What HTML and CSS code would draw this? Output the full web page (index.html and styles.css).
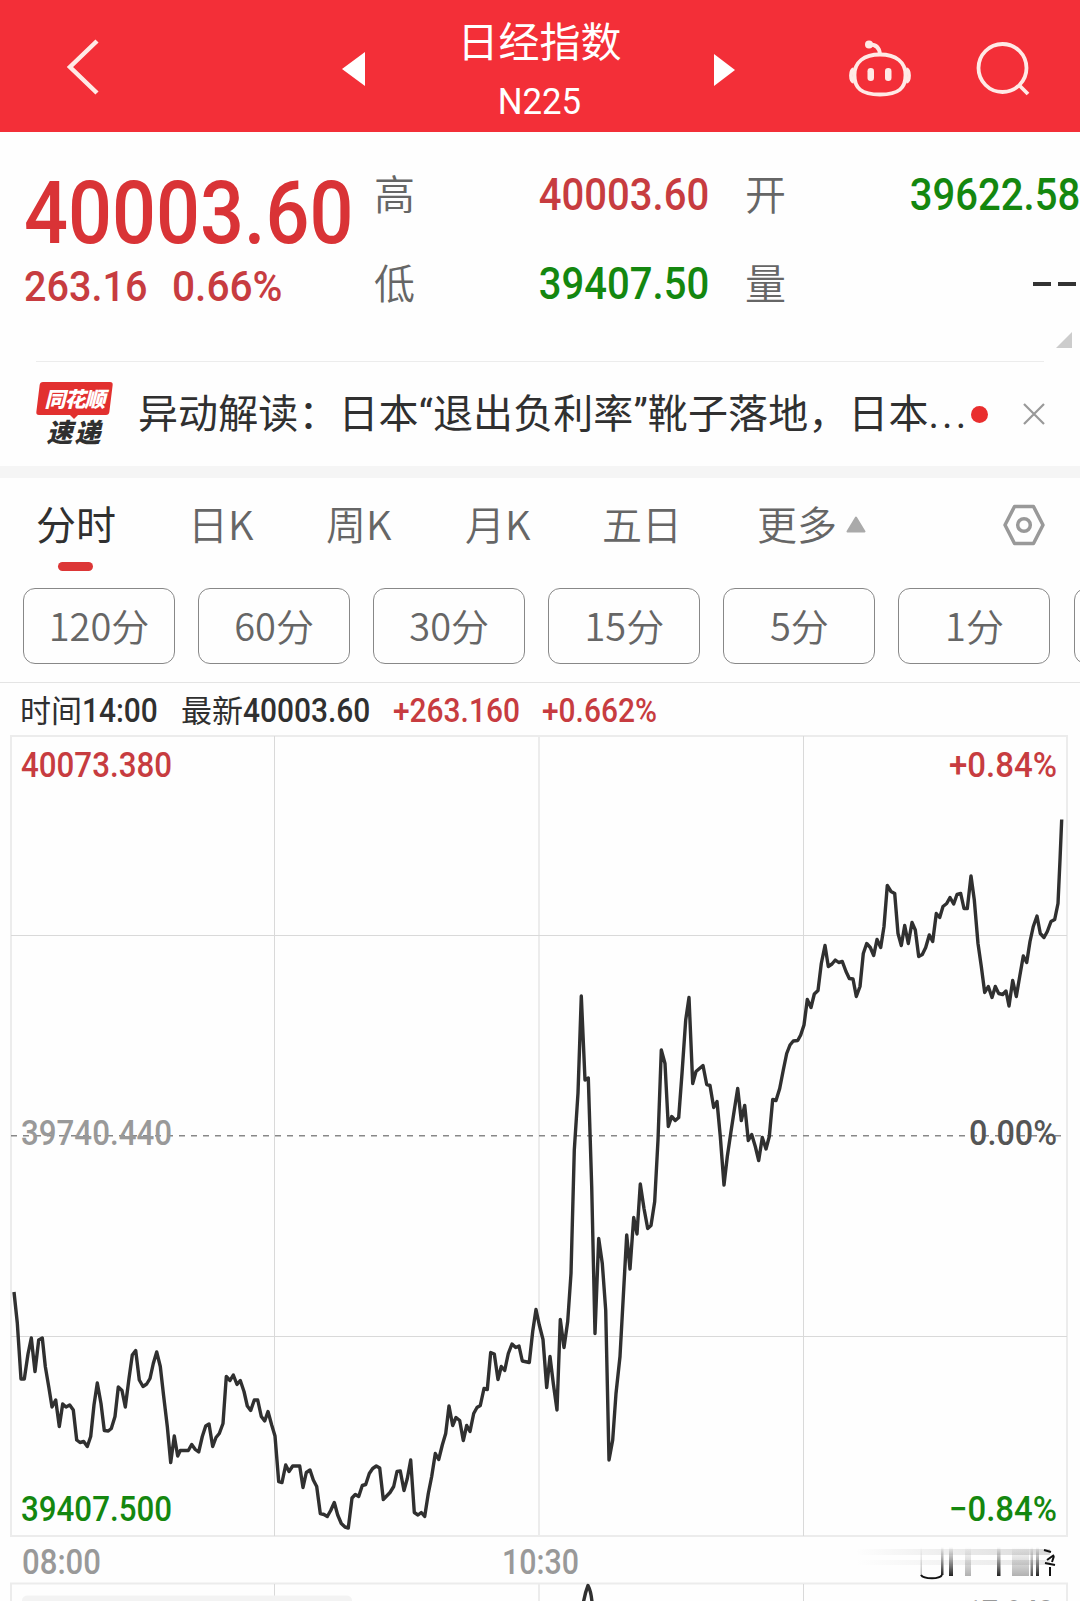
FILE: index.html
```html
<!DOCTYPE html>
<html lang="zh-CN">
<head>
    <meta charset="UTF-8">
    <meta name="viewport" content="width=device-width, initial-scale=1.0">
    <title>日经指数 N225</title>
    <link rel="stylesheet" href="styles.css">
</head>
<body>
    <header class="header">
        <svg class="icon-back" viewBox="0 0 34 58"><path d="M31 3 L4 29 L31 55"/></svg>
        <svg class="icon-prev" viewBox="0 0 23 34"><path d="M23 0 V34 L0 17 Z"/></svg>
        <div class="title">
            <h1>日经指数</h1>
            <div class="code"><span class="num">N225</span></div>
        </div>
        <svg class="icon-next" viewBox="0 0 21 32"><path d="M0 0 V32 L21 16 Z"/></svg>
        <svg class="icon-robot" viewBox="0 0 62 58">
            <path d="M31 14.500 C47 14.500 56.500 22 56.500 35 C56.500 48 50 54.500 31 54.500 C12 54.500 5.500 48 5.500 35 C5.500 22 15 14.500 31 14.500 Z"/>
            <path d="M5 29 Q2 30 2 35.500 Q2 41 5 42 M57 29 Q60 30 60 35.500 Q60 41 57 42"/>
            <path d="M20 4.500 Q30 4 31 14"/>
            <circle class="fill" cx="20" cy="4.500" r="4"/>
            <rect class="fill" x="18.500" y="28" width="6.500" height="13" rx="3.200"/>
            <rect class="fill" x="36" y="28" width="6.500" height="13" rx="3.200"/>
        </svg>
        <svg class="icon-search" viewBox="0 0 56 56"><circle cx="26.500" cy="26" r="24"/><path d="M43 43 L52 52"/></svg>
    </header>

    <section class="quote">
        <div class="quote-main">
            <div class="price"><span class="num">40003.60</span></div>
            <div class="change">
                <span class="num">263.16</span>
                <span class="num">0.66%</span>
            </div>
        </div>
        <div class="quote-grid">
            <span class="label">高</span>
            <span class="value up"><span class="num">40003.60</span></span>
            <span class="label">开</span>
            <span class="value down"><span class="num">39622.58</span></span>
            <span class="label">低</span>
            <span class="value down"><span class="num">39407.50</span></span>
            <span class="label">量</span>
            <span class="value dashes"><i></i><i></i></span>
        </div>
        <div class="corner"></div>
    </section>

    <section class="news">
        <div class="news-logo">
            <div class="logo-top">同花顺</div>
            <div class="logo-bottom">速递</div>
        </div>
        <div class="news-text">异动解读：日本“退出负利率”靴子落地，日本<span class="more-dots">...</span></div>
        <span class="dot"></span>
        <svg class="icon-close" viewBox="0 0 22 22"><path d="M1 1 L21 21 M21 1 L1 21"/></svg>
    </section>

    <nav class="tabs">
        <span class="tab active">分时</span>
        <span class="tab">日K</span>
        <span class="tab">周K</span>
        <span class="tab">月K</span>
        <span class="tab">五日</span>
        <span class="tab">更多<svg class="icon-up" viewBox="0 0 20 17"><path d="M10 1.500 L18.500 15.500 H1.500 Z"/></svg></span>
        <svg class="icon-setting" viewBox="0 0 42 42"><path d="M11.500 2.500 H30.500 L40 21 L30.500 39.500 H11.500 L2 21 Z"/><circle cx="21" cy="21" r="6.300"/></svg>
    </nav>

    <div class="periods">
        <span class="period">120分</span>
        <span class="period">60分</span>
        <span class="period">30分</span>
        <span class="period">15分</span>
        <span class="period">5分</span>
        <span class="period">1分</span>
        <span class="period"></span>
    </div>

    <div class="info">
        <span>时间<span class="num">14:00</span></span>
        <span>最新<span class="num">40003.60</span></span>
        <span class="up"><span class="num">+263.160</span></span>
        <span class="up"><span class="num">+0.662%</span></span>
    </div>

    <svg class="chart" viewBox="0 734 1080 867">
        <defs>
            <linearGradient id="fade" x1="0" y1="0" x2="0" y2="1">
                <stop offset="0" stop-color="#222" stop-opacity="0"/>
                <stop offset="0.5" stop-color="#222" stop-opacity="0.450"/>
                <stop offset="1" stop-color="#222"/>
            </linearGradient>
            <linearGradient id="smear" x1="0" y1="0" x2="1" y2="0">
                <stop offset="0" stop-color="#555" stop-opacity="0"/>
                <stop offset="1" stop-color="#555" stop-opacity="0.350"/>
            </linearGradient>
        </defs>

        <!-- grid -->
        <path class="frame" d="M11 736 H1067 V1536 H11 Z M11 1601 V1583.500 H1067 V1601"/>
        <path class="frame" d="M539 736 V1536 M539 1583.500 V1601"/>
        <path class="grid" d="M274.500 736 V1536 M803.500 736 V1536 M11 935.500 H1067 M11 1336.500 H1067 M274.500 1584 V1601 M803.500 1584 V1601"/>
        <path class="base" d="M11 1135.700 H1067"/>

        <!-- axis labels -->
        <text class="up" x="21" y="777" textLength="151" lengthAdjust="spacingAndGlyphs">40073.380</text>
        <text class="up" x="949" y="777" textLength="108" lengthAdjust="spacingAndGlyphs">+0.84%</text>
        <text class="mid" x="21" y="1145" textLength="151" lengthAdjust="spacingAndGlyphs">39740.440</text>
        <text class="zero" x="969" y="1145" textLength="88" lengthAdjust="spacingAndGlyphs">0.00%</text>
        <text class="down" x="21" y="1521" textLength="151" lengthAdjust="spacingAndGlyphs">39407.500</text>
        <text class="down" x="949" y="1521" textLength="108" lengthAdjust="spacingAndGlyphs">−0.84%</text>
        <text class="time" x="22" y="1574" textLength="79" lengthAdjust="spacingAndGlyphs">08:00</text>
        <text class="time" x="502" y="1574" textLength="77" lengthAdjust="spacingAndGlyphs">10:30</text>

        <!-- price line -->
        <polyline class="line" points="14,1292 17.3,1323 21,1379 24.3,1379 28,1354 31.3,1338 35,1371.5 38.7,1340 42.3,1338 45.3,1366.5 48.7,1386.5 52,1407 55.7,1400 59.3,1426.5 62.7,1404 66,1407 69.7,1405 73.3,1410 76.7,1440 80,1442.5 83.7,1441.5 87.3,1446.5 90.7,1436.5 94,1405 97.3,1383 101,1403.5 104.3,1430.5 108.3,1431 111.3,1428.5 115,1416.5 118.3,1387 122,1390.5 125.3,1407 129,1378.5 132.3,1355 135.7,1350.5 139.3,1380 143,1386.5 146.7,1384 150,1378.5 153.3,1363.5 156.7,1352 160.3,1366.5 163.7,1396.5 167.3,1426.5 170.7,1462.5 174.3,1436 177.7,1456 180.3,1450.5 188.3,1450.5 191.7,1444.5 195.3,1449.5 198.7,1452 202.3,1436.5 205.7,1426 209,1424 212.7,1446.5 216,1437.5 219.3,1433.5 223,1423.5 226.3,1376.5 230,1380.5 233.3,1375 237,1384.5 240.3,1380.5 244,1391.5 247.3,1406 250.7,1410.5 254.3,1400 257.7,1400 261.3,1416.5 264.7,1421 268,1411.5 271.7,1425 275,1436 278.7,1481.5 282,1482.5 285.7,1465 289,1471.5 292.7,1466 299.7,1466 303,1487.5 306.3,1472.5 310,1470 313.3,1480 316.7,1486.5 320.3,1513.5 324,1514.5 327.3,1516.5 330.7,1510.5 334.3,1502.5 337.7,1515 341.3,1523.5 345,1527 348.3,1528
            352,1498 355.3,1494.5 358.7,1496.5 362.3,1485.5 365.7,1484.5 369.3,1473.5 372.7,1468.5 376.3,1466 379.7,1468 383.3,1499.5 390,1492.5 393.7,1486.5 397,1471.5 400.3,1471 404,1490.5 407.3,1478.5 410.7,1460 414.3,1512.5 418,1515 421.3,1512.5 424.7,1516.5 428.3,1493.5 431.7,1476.5 435.3,1453.5 438.7,1459.5 442.3,1445 445.7,1433.5 449,1406 452.7,1425.5 456,1417.5 459.7,1420.5 463.3,1440.5 466.7,1425.5 470,1431.5 473.7,1413.5 477,1407.5 480.3,1405.5 484,1388.5 487.3,1389.5 490.7,1352.5 494.3,1354 498,1379.5 501.3,1366.5 504.7,1370.5 508.3,1353.5 512,1344 515.7,1347.5 519,1346 522.3,1361 529.3,1362.5 532.7,1331.5 536,1309.5 539.3,1325 543,1339.5 546.7,1387.5 550,1356.5 553.3,1383.5 557,1410 560.3,1319.5 564,1347.5
            567.7,1321.5 571,1273.5 574.3,1150 578,1093 581.3,996 585,1080 588.3,1078 591.7,1186.5 595,1333.5 598.7,1238.5 602.3,1263.5 605.7,1310 609,1460 612.7,1440 616,1393.5 620,1356.5 623.3,1296.5 626.7,1235 630,1269 633.7,1217.5 637,1234 640.3,1184 644,1208.5 647.7,1228.5 651,1225.5 654.7,1201.5 658,1140 661.3,1050 665,1063.5 668.3,1126.5 671.7,1116.5 675.3,1120.5 678.7,1117.5 682,1073.5 685.7,1020 689,997.5 692.7,1083.5 696,1071.5 703,1065.5 706.7,1084.5 710,1085.5 713.7,1107.5 717,1101.5 720.3,1136.5 724,1185 727.3,1156.5 731,1131.5 734.3,1110 737.7,1088.5 741.3,1120.5 744.7,1105.5 748.3,1140.5 751.7,1134.5 755.3,1146.5 758.7,1160.5 762.3,1137.5 766,1149 769.3,1136.5 772.7,1099.5 776,1100.5 779.7,1088.5 783.3,1070 786.7,1053.5 790,1045 793.3,1041 797.7,1040.5 800.7,1035 804,1025 807.3,999.5 811,1007.5 814.3,994
            818,990.5 821.3,963.5 825,945.5 828.3,966.5 832,964 835.3,960 838.7,962.5 842.3,961.5 846,971.5 849.3,978.5 853,979 856.3,996.5 860,986.5 863.3,953.5 866.7,943.5 870.3,947.5 873.7,955.5 877,939.5 880.7,947.5 884,926.5 887.3,885.5 891,891.5 894.7,893.5 898,933.5 901.3,945.5 904.7,925.5 908.3,943.5 912,922.5 915.3,930 918.7,956.5 922.3,954.5 925.7,947.5 929.3,935 932.7,941.5 936.3,913.5 939.7,917.5 943,906.5 946.7,903.5 950,897.5 953.7,904 957,894.5 960.7,893.5 964,908.5 967.3,908.5 971,876 974.3,900 978,943.5 981.3,966.5 984.7,992.5 988.3,986.5 992,997.5 995.3,986.5 998.7,993.5 1002.7,994.5 1006,991 1009,1006 1012.7,980.5 1016.3,996.5 1019.7,976.5 1023.3,956 1026.7,962.5 1030,941.5 1033.3,926.5 1037,916 1040.3,933.5 1044,937.5 1047.3,931.5 1051,921.5 1054.7,919.5 1058,903.5 1060,860 1061.7,819.5"/>

        <!-- smeared time label -->
        <g>
            <rect x="855" y="1549" width="195" height="6" fill="url(#smear)" opacity="0.600"/>
            <rect x="855" y="1560" width="195" height="5" fill="url(#smear)" opacity="0.400"/>
            <rect x="920.500" y="1547" width="1.500" height="29" fill="url(#fade)" opacity="0.300"/>
            <rect x="941" y="1547" width="2.500" height="28" fill="url(#fade)"/>
            <path class="ink" d="M921 1575 Q923 1578.300 932 1578.300 Q940 1578.300 942 1575"/>
            <rect x="949" y="1547" width="4" height="29" fill="url(#fade)"/>
            <rect x="965" y="1547" width="6" height="29" fill="url(#fade)" opacity="0.350"/>
            <rect x="997" y="1547" width="3.500" height="29" fill="url(#fade)"/>
            <rect x="1012" y="1547" width="17" height="29" fill="url(#fade)" opacity="0.350"/>
            <rect x="1030.500" y="1547" width="2.500" height="29" fill="url(#fade)" opacity="0.800"/>
            <rect x="1036" y="1547" width="3" height="29" fill="url(#fade)"/>
            <path class="ink" d="M1044 1550 L1051 1552 M1054 1555 L1047 1560 M1045 1563 L1055 1565 M1054 1556 L1052 1562 M1050 1567 V1576"/>
        </g>

        <!-- lower panel, cut by the screen edge -->
        <path class="panel" d="M22 1601 Q22 1595.500 28 1595.500 H346 Q352 1595.500 352 1601 Z"/>
        <path class="line" d="M583.500 1602 Q585 1593 588 1585.500 Q591 1591 592 1602"/>
        <text class="mid" x="966" y="1625" textLength="88" lengthAdjust="spacingAndGlyphs">17.943</text>
    </svg>
</body>
</html>
```
FILE: styles.css
```css
:root {
    --red: #f32f38;
    --up: #c73c40;
    --down: #14870f;
    --dark: #303030;
    --grey: #666;
}

* {
    margin: 0;
    padding: 0;
    box-sizing: border-box;
}

body {
    width: 1080px;
    height: 1601px;
    overflow: hidden;
    background: #fefefe;
    color: var(--dark);
    font-family: "Noto Sans CJK SC", sans-serif;
}

svg {
    display: block;
    flex: none;
}

/* narrow digits */
.num {
    display: inline-block;
    font-family: Roboto, sans-serif;
    font-weight: 500;
    transform: scaleX(0.92);
    transform-origin: left;
}

.up {
    color: var(--up);
    fill: var(--up);
}

.down {
    color: var(--down);
    fill: var(--down);
}

/* header */
.header {
    display: flex;
    height: 132px;
    background: var(--red);
    color: #fff;
}

.header svg {
    fill: none;
    stroke: #ffeae6;
    stroke-width: 3.8;
}

.header .fill {
    fill: #ffeae6;
    stroke: none;
}

.header .icon-back {
    width: 34px;
    height: 58px;
    margin: 38px 0 0 66px;
    stroke-width: 4.5;
}

.header .icon-prev,
.header .icon-next {
    fill: #fff;
    stroke: none;
}

.icon-prev {
    width: 23px;
    height: 34px;
    margin: 52px 0 0 242px;
}

.icon-next {
    width: 21px;
    height: 32px;
    margin: 54px 0 0;
}

.title {
    width: 349px;
    padding-top: 14px;
    text-align: center;
}

.title h1 {
    font-size: 41px;
    line-height: 50px;
    font-weight: 400;
}

.code {
    font-size: 37px;
    line-height: 44px;
    margin-top: 12px;
}

.code .num {
    font-weight: 400;
    transform: scaleX(0.94);
    transform-origin: center;
}

.icon-robot {
    width: 62px;
    height: 58px;
    margin: 40px 0 0 114px;
}

.icon-search {
    width: 56px;
    height: 56px;
    margin: 42px 0 0 65px;
}

/* quote */
.quote {
    position: relative;
    display: flex;
    height: 229px;
    padding: 39px 0 0 24px;
}

.quote-main {
    width: 350px;
    color: #d93336;
}

.price {
    height: 91px;
    font-size: 87px;
    line-height: 69px;
    white-space: nowrap;
}

.price .num {
    transform: scaleX(0.89);
}

.change {
    display: grid;
    grid-template-columns: 148px 1fr;
    font-size: 43px;
    line-height: 48px;
    color: var(--up);
}

.change .num:last-child {
    transform: scaleX(0.945);
}

.quote-grid {
    display: grid;
    grid-template-columns: 41px 294px 76px 295px;
    grid-template-rows: 89px 89px;
    margin-top: -23px;
}

.quote-grid > span {
    line-height: 88px;
}

.label {
    color: var(--grey);
    font-size: 41px;
    font-weight: 350;
}

.quote-grid .label:nth-child(4n + 3) {
    padding-left: 36px;
}

.value {
    font-size: 43.5px;
    text-align: right;
}

.value .num {
    transform-origin: right;
}

.dashes {
    display: flex;
    justify-content: flex-end;
    align-items: center;
    gap: 7px;
    padding: 4px 4px 0 0;
}

.dashes i {
    width: 18px;
    height: 4px;
    background: #333;
}

.corner {
    position: absolute;
    right: 8px;
    bottom: 13px;
    border-left: 16px solid transparent;
    border-bottom: 16px solid #ccc;
}

/* news */
.news {
    display: flex;
    align-items: center;
    height: 105px;
    margin: 0 36px;
    border-top: 1px solid #ececec;
}

.news-logo {
    flex: none;
    width: 77px;
    height: 64px;
    margin-right: 25px;
    text-align: center;
    font-weight: 900;
    font-style: italic;
}

.logo-top {
    position: relative;
    height: 33px;
    color: #fff;
    font-size: 21px;
    line-height: 33px;
    letter-spacing: -1px;
    z-index: 0;
}

.logo-top::before {
    content: "";
    position: absolute;
    inset: 0 2px;
    border-radius: 3px;
    background: #e2302f;
    transform: skewX(-7deg);
    z-index: -1;
}

.logo-top::after {
    content: "";
    position: absolute;
    left: 33px;
    top: 32px;
    border: 5px solid transparent;
    border-top-color: #e2302f;
    border-bottom: 0;
}

.logo-bottom {
    font-size: 26px;
    line-height: 31px;
    letter-spacing: 2px;
}

.news-text {
    flex: none;
    width: 829px;
    padding-top: 2px;
    font-family: Roboto, "Noto Sans CJK SC", sans-serif;
    font-size: 40px;
    line-height: 60px;
    letter-spacing: 0.1px;
    white-space: nowrap;
}

.more-dots {
    letter-spacing: 3px;
}

.dot {
    flex: none;
    width: 17px;
    height: 17px;
    margin: 0 35px 0 4px;
    border-radius: 50%;
    background: #e92e2e;
}

.icon-close {
    width: 22px;
    height: 22px;
    stroke: #999;
    stroke-width: 2.2;
}

/* tabs */
.tabs {
    display: grid;
    grid-template-columns: 152px 138px 139px 137px 155px 246px 42px;
    height: 122px;
    padding: 16px 0 0 36px;
    border-top: 12px solid #f5f5f5;
    color: var(--grey);
    font-size: 40px;
    line-height: 58px;
    font-weight: 350;
}

.tab {
    display: flex;
    height: 76px;
}

.tab.active {
    position: relative;
    color: var(--dark);
    font-weight: 400;
}

.tab.active::after {
    content: "";
    position: absolute;
    left: 22px;
    bottom: -1px;
    width: 35px;
    height: 9px;
    border-radius: 5px;
    background: #dc3636;
}

.icon-up {
    width: 20px;
    height: 17px;
    margin: 22px 0 0 9px;
    fill: #aaa;
    stroke: #aaa;
    stroke-width: 2;
    stroke-linejoin: round;
}

.icon-setting {
    width: 42px;
    height: 42px;
    margin-top: 10px;
    fill: none;
    stroke: #999;
    stroke-width: 3.5;
    stroke-linejoin: round;
}

/* periods */
.periods {
    display: flex;
    gap: 23.1px;
    height: 94px;
    padding-left: 23px;
    overflow: hidden;
}

.period {
    flex: none;
    width: 152px;
    height: 76px;
    border: 1px solid #888;
    border-radius: 12px;
    color: var(--grey);
    font-size: 38px;
    font-weight: 350;
    line-height: 71px;
    text-align: center;
}

/* info */
.info {
    display: grid;
    grid-template-columns: 161px 212px 149px 1fr;
    height: 52px;
    padding-left: 20px;
    border-top: 1px solid #e4e4e4;
    font-size: 31px;
    line-height: 52px;
    white-space: nowrap;
}

.info .num {
    font-size: 32.5px;
}

/* chart */
.chart {
    width: 1080px;
    height: 867px;
}

.frame {
    fill: none;
    stroke: #ececec;
    stroke-width: 2;
}

.grid {
    fill: none;
    stroke: #d9d9d9;
    stroke-width: 1;
}

.base {
    stroke: #888;
    stroke-width: 1.5;
    stroke-dasharray: 6 6;
}

.line {
    fill: none;
    stroke: #303030;
    stroke-width: 3.4;
    stroke-linejoin: round;
}

.chart text {
    font-family: Roboto, sans-serif;
    font-size: 35px;
    font-weight: 500;
}

.mid,
.time {
    fill: #999;
}

.zero {
    fill: #555;
}

.ink {
    fill: none;
    stroke: #111;
    stroke-width: 2;
}

.panel {
    fill: #f3f3f3;
}
```
